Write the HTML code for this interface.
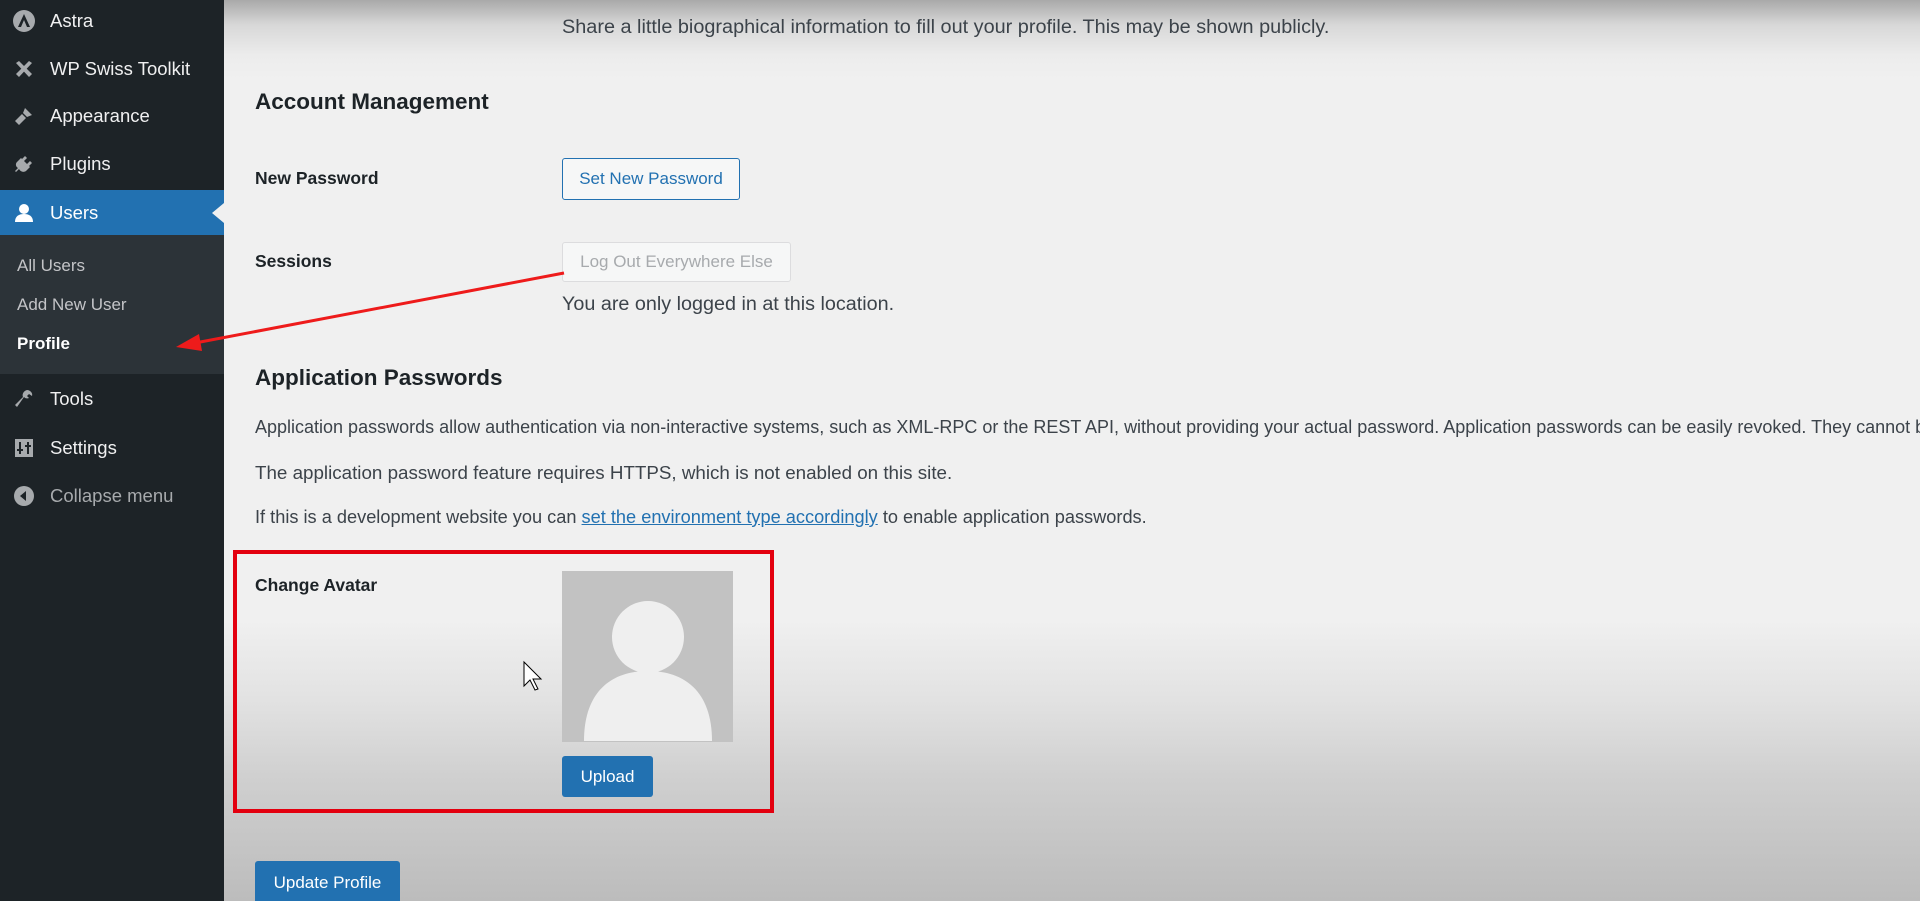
<!DOCTYPE html>
<html><head><meta charset="utf-8"><style>
*{margin:0;padding:0;box-sizing:border-box}
html,body{width:1920px;height:901px;overflow:hidden}
body{font-family:"Liberation Sans",sans-serif;position:relative;
background:linear-gradient(to bottom,#a9a9a9 0px,#d8d8d8 25px,#ececec 55px,#f0f0f0 80px,#f0f0f0 620px,#e2e2e2 700px,#cfcfcf 780px,#bcbcbc 901px);}
.wrap{position:absolute;left:0;top:0;width:1920px;height:901px;overflow:hidden}
.sb{position:absolute;left:0;top:0;width:224px;height:901px;background:#1d2327}
.mi{position:absolute;left:0;width:224px;color:#f0f0f1;font-size:18.5px;line-height:24px}
.mi .ic{position:absolute;left:12px;top:0;width:24px;height:24px}
.mi span{position:absolute;left:50px;top:0;white-space:nowrap}
.users{position:absolute;left:0;top:190px;width:224px;height:45px;background:#2271b1}
.sub{position:absolute;left:0;top:235px;width:224px;height:139px;background:#2c3338}
.si{position:absolute;left:17px;font-size:17px;color:#c3c4c7}
.t{position:absolute;color:#3c434a;font-size:18px;white-space:nowrap}
.h{position:absolute;color:#1d2327;font-size:22.5px;font-weight:bold;white-space:nowrap}
.lbl{position:absolute;color:#1d2327;font-size:17.5px;font-weight:bold;white-space:nowrap}
.btn{position:absolute;border-radius:3px;font-size:17px;display:flex;align-items:center;justify-content:center;white-space:nowrap}
</style></head><body><div class="wrap">
<div class="sb"></div>
<div class="users"></div>
<div class="sub"></div>
<div style="position:absolute;left:212px;top:203px;width:0;height:0;border-top:10px solid transparent;border-bottom:10px solid transparent;border-right:12px solid #f0f0f0"></div>

<div class="mi" style="top:9px"><svg class="ic" viewBox="0 0 24 24"><circle cx="12" cy="12" r="11" fill="#a7aaad"/><path d="M12 5 L6 18 H9 L12 11 L15 18 H18 Z" fill="#1d2327"/></svg><span>Astra</span></div>
<div class="mi" style="top:57px"><svg class="ic" viewBox="0 0 24 24"><path d="M4 6 L7 4 L20 17 L17 20 Z M17 4 L20 6 L7 20 L4 17 Z" fill="#a7aaad"/></svg><span>WP Swiss Toolkit</span></div>
<div class="mi" style="top:104px"><svg class="ic" viewBox="0 0 24 24"><path d="M13 4 L20 11 L15 13 L11 9 Z M10 10 L14 14 L7 21 L3 17 Z" fill="#a7aaad"/></svg><span>Appearance</span></div>
<div class="mi" style="top:152px"><svg class="ic" viewBox="0 0 24 24"><path d="M9 6 L18 15 L14 19 C11 21 8 19 7 17 L4 20 L3 19 L6 16 C4 15 3 12 5 10 Z M13 4 L15 6 L12 9 L10 7 Z M18 9 L20 11 L17 14 L15 12 Z" fill="#a7aaad"/></svg><span>Plugins</span></div>
<div class="mi" style="top:201px;color:#fff"><svg class="ic" viewBox="0 0 24 24"><circle cx="12" cy="8" r="5" fill="#fff"/><path d="M3 21 C3 15 7 13 12 13 C17 13 21 15 21 21 Z" fill="#fff"/></svg><span>Users</span></div>
<div class="si" style="top:256px">All Users</div>
<div class="si" style="top:295px">Add New User</div>
<div class="si" style="top:334px;color:#fff;font-weight:bold">Profile</div>
<div class="mi" style="top:387px"><svg class="ic" viewBox="0 0 24 24"><path d="M15 3 C18 3 21 6 20 9 L17 7 L15 9 L17 11 C14 12 13 11 12 10 L5 20 L3 18 L11 10 C10 8 11 4 15 3 Z" fill="#a7aaad"/></svg><span>Tools</span></div>
<div class="mi" style="top:436px"><svg class="ic" viewBox="0 0 24 24"><rect x="3" y="3" width="18" height="18" fill="#a7aaad"/><path d="M8 6 V18 M16 6 V18 M5 14 H11 M13 10 H19" stroke="#1d2327" stroke-width="2"/></svg><span>Settings</span></div>
<div class="mi" style="top:484px;color:#a7aaad"><svg class="ic" viewBox="0 0 24 24"><circle cx="12" cy="12" r="10" fill="#a7aaad"/><path d="M14 7 L8 12 L14 17 Z" fill="#1d2327"/></svg><span>Collapse menu</span></div>

<div class="t" style="left:562px;top:17px;font-size:19px;transform:scaleX(1.045);transform-origin:left">Share a little biographical information to fill out your profile. This may be shown publicly.</div>
<div class="h" style="left:255px;top:89px">Account Management</div>
<div class="lbl" style="left:255px;top:168px">New Password</div>
<div class="btn" style="left:562px;top:158px;width:178px;height:42px;border:1.5px solid #2271b1;color:#2271b1;background:#f6f7f7">Set New Password</div>
<div class="lbl" style="left:255px;top:251px">Sessions</div>
<div class="btn" style="left:562px;top:242px;width:229px;height:40px;border:1px solid #dcdcde;color:#a7aaad;background:#f6f7f7">Log Out Everywhere Else</div>
<div class="t" style="left:562px;top:294px;font-size:19px;transform:scaleX(1.04);transform-origin:left">You are only logged in at this location.</div>
<div class="h" style="left:255px;top:365px">Application Passwords</div>
<div class="t" style="left:255px;top:417px;font-size:18px">Application passwords allow authentication via non-interactive systems, such as XML-RPC or the REST API, without providing your actual password. Application passwords can be easily revoked. They cannot be used for traditional logins.</div>
<div class="t" style="left:255px;top:462px;font-size:18.5px;transform:scaleX(1.015);transform-origin:left">The application password feature requires HTTPS, which is not enabled on this site.</div>
<div class="t" style="left:255px;top:507px;font-size:18.2px">If this is a development website you can <span style="color:#2271b1;text-decoration:underline">set the environment type accordingly</span> to enable application passwords.</div>

<div style="position:absolute;left:233px;top:550px;width:541px;height:263px;border:4px solid #e3000f"></div>
<div class="lbl" style="left:255px;top:575px">Change Avatar</div>
<svg style="position:absolute;left:562px;top:571px" width="171" height="171" viewBox="0 0 171 171"><rect width="171" height="171" fill="#c2c2c2"/><circle cx="86" cy="66" r="36" fill="#efefef"/><path d="M22 170 C22 120 50 100 86 100 C122 100 150 120 150 170 Z" fill="#efefef"/></svg>
<div class="btn" style="left:562px;top:756px;width:91px;height:41px;background:#2271b1;color:#fff">Upload</div>
<div class="btn" style="left:255px;top:861px;width:145px;height:48px;background:#2271b1;color:#fff;align-items:flex-start;padding-top:12px">Update Profile</div>

<svg style="position:absolute;left:0;top:0" width="1920" height="901"><line x1="564" y1="273" x2="195" y2="343" stroke="#ee1b1b" stroke-width="3"/><path d="M176 347 L199 334 L202 351 Z" fill="#ee1b1b"/>
<path d="M524 662 L524 686 L530 680 L535 690 L538 689 L533 679 L541 679 Z" fill="#fff" stroke="#000" stroke-width="1"/></svg>
</div></body></html>
